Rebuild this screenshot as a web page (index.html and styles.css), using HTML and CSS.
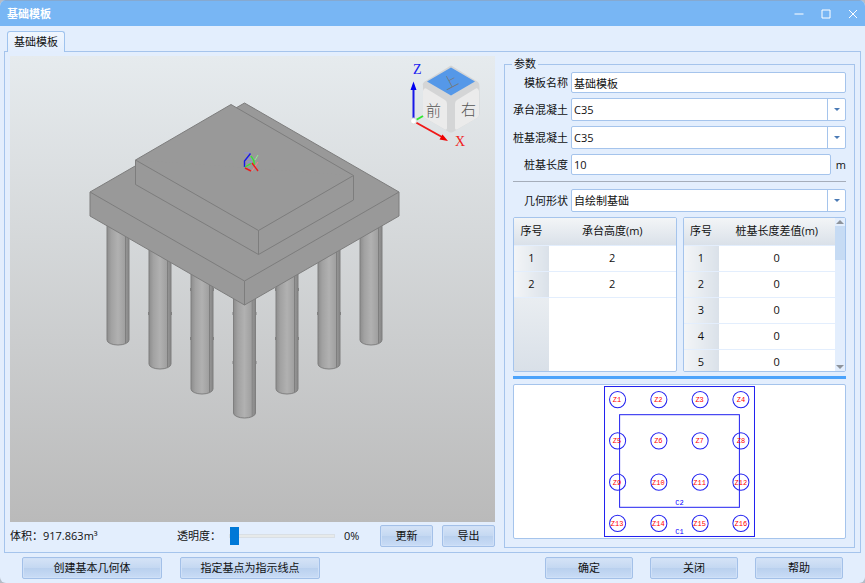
FILE: index.html
```html
<!DOCTYPE html>
<html lang="zh-CN">
<head>
  <meta charset="UTF-8" />
  <meta name="viewport" content="width=device-width, initial-scale=1.0"/>
  <title>基础模板</title>
  <link rel="stylesheet" href="styles.css">
</head>
<body>
  <div class="window">
    <header class="titlebar">
      <h1>基础模板</h1>
      <div class="window-btns">
        <button type="button" aria-label="最小化"><svg width="10" height="10" viewBox="0 0 10 10"><path d="M0.5 5H9.5"/></svg></button>
        <button type="button" aria-label="最大化"><svg width="10" height="10" viewBox="0 0 10 10"><path d="M1 1H9V9H1Z"/></svg></button>
        <button type="button" aria-label="关闭窗口"><svg width="10" height="10" viewBox="0 0 10 10"><path d="M1 1L9 9M9 1L1 9"/></svg></button>
      </div>
    </header>

    <nav class="tabs">
      <button type="button" class="tab active">基础模板</button>
    </nav>

    <main class="panel">
      <section class="preview">
        <div class="viewport">
          <svg class="model" viewBox="10 56 485 466">
            <defs>
              <linearGradient id="pileFill">
                <stop offset="0" stop-color="#8d8d8d"/>
                <stop offset="0.2" stop-color="#a2a2a2"/>
                <stop offset="0.5" stop-color="#b1b1b1"/>
                <stop offset="0.81" stop-color="#a0a0a0"/>
                <stop offset="0.84" stop-color="#7e7e7e"/>
                <stop offset="0.88" stop-color="#929292"/>
                <stop offset="1" stop-color="#868686"/>
              </linearGradient>
            </defs>
            <!-- piles -->
            <g class="piles" fill="url(#pileFill)">
              <path d="M107 200V340A11 5 0 0 0 129 340V200Z"/>
              <path d="M360 200V340A11 5 0 0 0 382 340V200Z"/>
              <path d="M149 230V364A11 5 0 0 0 171 364V230Z"/>
              <path d="M318 230V364A11 5 0 0 0 340 364V230Z"/>
              <path d="M191 250V389A11 5 0 0 0 213 389V250Z"/>
              <path d="M276 250V389A11 5 0 0 0 298 389V250Z"/>
              <path d="M233.500 280V413A11 5 0 0 0 255.500 413V280Z"/>
            </g>
            <path class="ticks" d="M190.500 288v3M213.500 288v3M275.500 288v3M298.500 288v3M148.500 312v3M171.500 312v3M233 312v3M256 312v3M317.500 312v3M340.500 312v3M190.500 337v3M213.500 337v3M275.500 337v3M298.500 337v3M233 361v3M256 361v3"/>
            <!-- lower cap -->
            <g class="cap">
              <path d="M90 192L244.500 103L399 192V216L244.500 305L90 216Z"/>
              <path d="M90 192L244.500 281L399 192M244.500 281V305"/>
            </g>
            <!-- upper cap -->
            <g class="cap">
              <path d="M135.500 160L231 104.500L353.500 175.500V200L258.500 254.500L135.500 184.500Z"/>
              <path d="M135.500 160L258.500 230.500L353.500 175.500M258.500 230.500V254.500"/>
            </g>
            <g class="origin">
              <path class="z-faint" d="M244.500 153H250M247 162h5M247 159h5"/>
              <path class="z" d="M250.500 153.500L244.500 161V167"/>
              <path class="y-faint" d="M258 155L255 160"/>
              <path class="y" d="M245 167L251 163.500M251 156L254 161V165"/>
              <path class="x-faint" d="M258 162L252 171"/>
              <path class="x" d="M245 168L251 171M252 163L258 171"/>
            </g>
          </svg>

          <svg class="view-cube" width="90" height="96" viewBox="405 58 90 96">
            <path class="cube-edge" d="M424 82L450 66Q451 65 452 66L478 82Q480 84 479.500 87V114Q479 117 477 118L453 132Q451 133 449 132L425 118Q423 117 423 114V86Q422 84 424 82Z"/>
            <path class="cube-side" d="M423 91Q424 87 427 89L445 100Q447 101 447 104V128Q447 131 444 129L425 118Q423 117 423 115Z"/>
            <path class="cube-side" d="M479 91Q478 87 475 89L457 100Q455 101 455 104V128Q455 131 458 129L477 118Q479 117 479 115Z"/>
            <path class="cube-top" d="M427 81.500L451 67.500L475 81.500L451 95.500Z"/>
            <text class="face" x="426" y="116">前</text>
            <text class="face" x="461" y="115">右</text>
            <text class="face top" x="443" y="87" transform="rotate(-28 451 82)">上</text>
            <path class="y" d="M416 120L423 116"/>
            <path class="z" d="M413.500 119V88"/>
            <path class="z-head" d="M413.500 81.500L416.500 90H410.500Z"/>
            <path class="x" d="M416 122.500L442 137"/>
            <path class="x-head" d="M448 141L439.500 139.500L442.500 134.500Z"/>
            <circle class="joint" cx="413.500" cy="121" r="3"/>
            <text class="axis-z" x="413" y="74">Z</text>
            <text class="axis-x" x="455" y="146">X</text>
          </svg>
        </div>

        <div class="toolbar">
          <span class="volume">体积：917.863m³</span>
          <label for="opacity">透明度：</label>
          <input type="range" id="opacity" min="0" max="100" value="0">
          <output for="opacity">0%</output>
          <button type="button" class="btn">更新</button>
          <button type="button" class="btn">导出</button>
        </div>
      </section>

      <fieldset class="params">
        <legend>参数</legend>

        <div class="field">
          <label for="name">模板名称</label>
          <input type="text" id="name" value="基础模板">
        </div>
        <div class="field">
          <label for="capConcrete">承台混凝土</label>
          <div class="combo">
            <select id="capConcrete"><option>C35</option></select>
          </div>
        </div>
        <div class="field">
          <label for="pileConcrete">桩基混凝土</label>
          <div class="combo">
            <select id="pileConcrete"><option>C35</option></select>
          </div>
        </div>
        <div class="field with-unit">
          <label for="pileLength">桩基长度</label>
          <input type="text" id="pileLength" value="10">
          <span>m</span>
        </div>

        <hr>

        <div class="field">
          <label for="shape">几何形状</label>
          <div class="combo">
            <select id="shape"><option>自绘制基础</option></select>
          </div>
        </div>

        <div class="tables">
          <div class="table-box">
            <div class="table-body">
              <table>
                <thead>
                  <tr><th class="index">序号</th><th>承台高度(m)</th></tr>
                </thead>
                <tbody>
                  <tr><th>1</th><td>2</td></tr>
                  <tr><th>2</th><td>2</td></tr>
                </tbody>
              </table>
              <div class="index-rest"></div>
            </div>
          </div>
          <div class="table-box">
            <div class="table-body">
              <table>
                <thead>
                  <tr><th class="index">序号</th><th>桩基长度差值(m)</th></tr>
                </thead>
                <tbody>
                  <tr><th>1</th><td>0</td></tr>
                  <tr><th>2</th><td>0</td></tr>
                  <tr><th>3</th><td>0</td></tr>
                  <tr><th>4</th><td>0</td></tr>
                  <tr><th>5</th><td>0</td></tr>
                </tbody>
              </table>
            </div>
            <div class="scrollbar">
              <svg width="10" height="8" viewBox="0 0 10 8"><path d="M1 6L5 2L9 6Z"/></svg>
              <div class="thumb"></div>
              <svg width="10" height="8" viewBox="0 0 10 8"><path d="M1 2L5 6L9 2Z"/></svg>
            </div>
          </div>
        </div>

        <div class="splitter"></div>

        <div class="plan">
          <svg viewBox="0 0 152 152">
            <rect x="1.500" y="1.500" width="149" height="149"/>
            <rect x="16.500" y="29.500" width="119" height="92"/>
            <g>
              <circle cx="14.500" cy="14.500" r="8"/><circle cx="55.500" cy="14.500" r="8"/><circle cx="96.500" cy="14.500" r="8"/><circle cx="137" cy="14.500" r="8"/>
              <circle cx="14.500" cy="55.500" r="8"/><circle cx="55.500" cy="55.500" r="8"/><circle cx="96.500" cy="55.500" r="8"/><circle cx="137" cy="55.500" r="8"/>
              <circle cx="14.500" cy="96.500" r="8"/><circle cx="55.500" cy="96.500" r="8"/><circle cx="96.500" cy="96.500" r="8"/><circle cx="137" cy="96.500" r="8"/>
              <circle cx="14.500" cy="137.500" r="8"/><circle cx="55.500" cy="137.500" r="8"/><circle cx="96.500" cy="137.500" r="8"/><circle cx="137" cy="137.500" r="8"/>
            </g>
            <g class="pile-no">
              <text x="14" y="17">Z1</text><text x="55" y="17">Z2</text><text x="96" y="17">Z3</text><text x="137" y="17">Z4</text>
              <text x="14" y="58">Z5</text><text x="55" y="58">Z6</text><text x="96" y="58">Z7</text><text x="137" y="58">Z8</text>
              <text x="14" y="99">Z9</text><text x="55" y="99">Z10</text><text x="96" y="99">Z11</text><text x="137" y="99">Z12</text>
              <text x="14" y="140">Z13</text><text x="55" y="140">Z14</text><text x="96" y="140">Z15</text><text x="137" y="140">Z16</text>
            </g>
            <g class="cap-no">
              <text x="76" y="119">C2</text>
              <text x="76" y="148">C1</text>
            </g>
          </svg>
        </div>
      </fieldset>
    </main>

    <footer class="actions">
      <button type="button" class="btn wide">创建基本几何体</button>
      <button type="button" class="btn wide">指定基点为指示线点</button>
      <div class="dialog-btns">
        <button type="button" class="btn">确定</button>
        <button type="button" class="btn">关闭</button>
        <button type="button" class="btn">帮助</button>
      </div>
    </footer>
  </div>

  <script>
    const opacity = document.getElementById('opacity');
    opacity.addEventListener('input', () => {
      document.querySelector('.toolbar output').textContent = opacity.value + '%';
      document.querySelector('.model').style.opacity = 1 - opacity.value / 100;
    });
  </script>
</body>
</html>
```
FILE: styles.css
```css
* {
  box-sizing: border-box;
}

body {
  margin: 0;
  background: #b4bcc6;
  color: #111;
}

body, button, input, select {
  font-family: "Open Sans", "Noto Sans CJK SC", sans-serif;
  font-size: 11px;
  line-height: 16px;
}

.window {
  display: flex;
  flex-direction: column;
  height: 100vh;
  background: #e3eefd;
  border-radius: 6px;
  overflow: hidden;
}

/* title bar */
.titlebar {
  display: flex;
  justify-content: space-between;
  align-items: center;
  height: 26px;
  padding: 0 7px;
  background: #78b6f4;
  border-top: 1px solid #86a9d0;
}

.titlebar h1 {
  margin: 0;
  font-size: 11px;
  color: #fff;
}

.window-btns {
  display: flex;
  gap: 17px;
}

.window-btns button {
  display: flex;
  padding: 0;
  border: none;
  background: none;
}

.window-btns path {
  fill: none;
  stroke: #fff;
}

/* tabs */
.tabs {
  display: flex;
  padding: 5px 7px 0;
}

.tab {
  height: 21px;
  margin-bottom: -1px;
  padding: 0 6px;
  border: 1px solid #9fc3ee;
  border-bottom: none;
  border-radius: 3px 3px 0 0;
  background: linear-gradient(#f0f6fe, #e3eefd);
  color: #111;
  z-index: 1;
}

.panel {
  flex: 1;
  min-height: 0;
  display: flex;
  gap: 9px;
  margin: 0 4px;
  padding: 4px 5px;
  border: 1px solid #a5c4ec;
}

/* 3D preview */
.preview {
  flex: 485 485 485px;
  min-width: 0;
  display: flex;
  flex-direction: column;
}

.viewport {
  position: relative;
  flex: 1;
  min-height: 0;
  background: linear-gradient(#e6ebee, #bababa);
}

.model {
  display: block;
  width: 100%;
  height: 100%;
}

.piles path {
  stroke: #7f7f7f;
}

.ticks {
  stroke: #808080;
}

.cap path {
  fill: #999;
  stroke: #7d7d7d;
  stroke-linejoin: round;
}

.origin path, .view-cube .x, .view-cube .y, .view-cube .z {
  fill: none;
}

.x { stroke: #f01818; }
.y { stroke: #30e830; }
.z { stroke: #1818e8; }
.x-faint { stroke: #f08a8a; }
.y-faint { stroke: #90f090; }
.z-faint { stroke: #8888e8; }

.origin .x, .origin .y, .origin .z {
  stroke-width: 1.4;
}

.view-cube {
  position: absolute;
  top: 2px;
  right: 0;
}

.view-cube .x, .view-cube .y, .view-cube .z {
  stroke-width: 2;
}

.x-head { fill: #f00000; }
.z-head { fill: #0000f0; }
.cube-edge { fill: #d4d5d6; }
.cube-side { fill: #ebebeb; }
.cube-top { fill: #5598e8; }
.joint { fill: #fff; stroke: #ddd; }

.face {
  font-size: 15px;
  font-weight: 300;
  fill: #555;
}

.face.top {
  fill: #777;
}

.axis-x, .axis-z {
  font-family: "Liberation Serif", serif;
  font-size: 14px;
}

.axis-x { fill: #f02020; }
.axis-z { fill: #2020f0; }

/* row under the preview */
.toolbar {
  display: flex;
  align-items: center;
  height: 24px;
  margin-top: 2px;
}

.volume {
  flex: 1;
}

#opacity {
  appearance: none;
  width: 106px;
  height: 20px;
  margin: 0 9px 0 8px;
  background: none;
}

#opacity::-webkit-slider-runnable-track {
  height: 4px;
  border: 1px solid #d9dfe5;
  background: #e7eaea;
}

#opacity::-webkit-slider-thumb {
  appearance: none;
  width: 9px;
  height: 18px;
  margin-top: -8px;
  background: #0078d7;
}

.toolbar output {
  width: 27px;
}

.btn {
  height: 22px;
  padding: 0;
  border: 1px solid #a3c0e8;
  border-radius: 2px;
  background: linear-gradient(#d5e3f7, #c4d8f2 50%, #b9d0ee 50%, #c9dcf6);
  box-shadow: inset 0 0 0 1px #cfe0f7;
  color: #111;
}

.btn:hover {
  background: #d8e8fc;
}

.toolbar .btn {
  width: 53px;
  margin-left: 9px;
}

/* parameters */
.params {
  flex: 351 351 351px;
  min-width: 0;
  display: flex;
  flex-direction: column;
  gap: 5px;
  margin: 0;
  padding: 0 8px;
  border: 1px solid #a5c4ec;
}

.params legend {
  margin-left: -1px;
  padding: 0 2px;
}

.field {
  display: grid;
  grid-template-columns: 55px 1fr;
  column-gap: 3px;
  align-items: center;
}

.field.with-unit {
  grid-template-columns: 55px 1fr 12px;
}

.field label, .field span {
  text-align: right;
}

.field input {
  width: 100%;
  height: 21px;
  padding: 0 2px;
  border: 1px solid #a5c4ec;
  border-radius: 2px;
  background: #fff;
  color: #111;
}

.combo {
  position: relative;
  display: flex;
}

.combo select {
  appearance: none;
  width: 100%;
  height: 23px;
  padding: 0 22px 0 2px;
  border: 1px solid #a5c4ec;
  border-radius: 2px;
  background: linear-gradient(#a5c4ec, #a5c4ec) right 17px top / 1px 100% no-repeat #fff;
  color: #111;
}

.combo::after {
  content: "";
  position: absolute;
  right: 6px;
  top: 10px;
  border: 3px solid transparent;
  border-top-color: #4a7ab5;
  border-bottom: none;
  pointer-events: none;
}

.params hr {
  width: 100%;
  margin: 1px 0 2px;
  border: none;
  border-top: 1px solid #a5adba;
}

.tables {
  flex: 1 1 2px;
  min-height: 0;
  display: grid;
  grid-template-columns: 1fr 1fr;
  grid-template-rows: 100%;
  gap: 6px;
}

.table-box {
  display: flex;
  border: 1px solid #a5c4ec;
  border-radius: 2px;
  background: #fff;
  overflow: hidden;
}

.table-body {
  flex: 1;
  display: flex;
  flex-direction: column;
}

table {
  width: 100%;
  table-layout: fixed;
  border-collapse: collapse;
}

th, td {
  height: 26px;
  padding: 0;
  border-bottom: 1px solid #e3eefd;
  font-weight: normal;
  text-align: center;
}

thead tr {
  background: linear-gradient(#f3f5f7, #dae1e9);
}

thead th {
  height: 27px;
}

.index {
  width: 35px;
}

tbody th {
  background: linear-gradient(to right, #f3f5f7, #dae1e9);
}

.index-rest {
  flex: 1;
  width: 35px;
  background: linear-gradient(#e9edf1, #d9e0e8);
}

.scrollbar {
  display: flex;
  flex-direction: column;
  width: 10px;
  background: #e3eefd;
}

.scrollbar path {
  fill: #8e949c;
}

.scrollbar .thumb {
  height: 34px;
  margin-bottom: auto;
  background: #c6dbf4;
}

.splitter {
  height: 3px;
  margin-top: -1px;
  background: #4ca3fb;
}

.plan {
  flex: 1 1 0;
  min-height: 0;
  margin-bottom: 8px;
  border: 1px solid #a5c4ec;
  border-radius: 2px;
  background: #fff;
}

.plan svg {
  display: block;
  width: 100%;
  height: 100%;
}

.plan rect, .plan circle {
  fill: none;
  stroke: #2222f0;
}

.plan text {
  font-family: "Liberation Mono", monospace;
  font-size: 7px;
  text-anchor: middle;
}

.pile-no { fill: #f00; }
.cap-no { fill: #00f; }

/* bottom buttons */
.actions {
  display: flex;
  gap: 18px;
  padding: 4px 22px 4px;
}

.btn.wide {
  width: 140px;
}

.dialog-btns {
  display: flex;
  gap: 17px;
  margin-left: auto;
}

.dialog-btns .btn {
  width: 88px;
}
```
